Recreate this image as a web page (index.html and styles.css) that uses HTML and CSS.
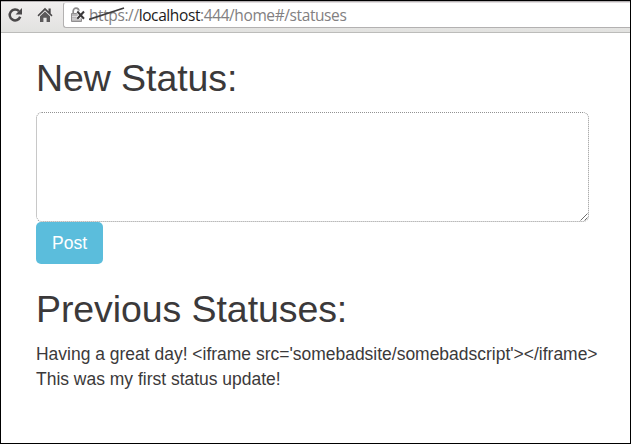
FILE: index.html
```html
<!DOCTYPE html>
<html lang="en">
<head>
<meta charset="utf-8">
<title>Statuses</title>
<link rel="stylesheet" href="styles.css">
</head>
<body>
<div class="window">
  <header class="toolbar">
    <svg class="icon reload" width="16" height="16" viewBox="0 0 16 16" aria-hidden="true">
      <path d="M12 4.200A5.400 5.400 0 1 0 13.200 9.800" fill="none" stroke="#4b494a" stroke-width="2.500"/>
      <path d="M15 1v6.400H8.600z" fill="#4b494a"/>
    </svg>
    <svg class="icon home" width="16" height="16" viewBox="0 0 16 16" aria-hidden="true">
      <path d="M8 .8 11.500 4.200V1.500h2.200v5L15.500 8.200 14.500 9.400 8 3.200 1.500 9.400.5 8.200z" fill="#4b494a"/>
      <path d="M8 4.500 13 9.300V15H9.600v-4.200H6.400V15H3V9.300z" fill="#5b595a"/>
    </svg>
    <div class="address">
      <svg class="lock" width="16" height="16" viewBox="0 0 16 16" aria-hidden="true">
        <path d="M3.200 6.500V4a2.800 2.800 0 0 1 5.600 0V6.500" fill="none" stroke="#8d8b8c" stroke-width="1.700"/>
        <path d="M1.500 6.500h10v8h-10z" fill="#b9b7b8" stroke="#918f90"/>
        <path d="M2 9.500h9M2 12h9" stroke="#dddbdc"/>
        <path d="M7.500 4.500l6.500 7M14 4.500l-6.500 7" stroke="#fff" stroke-width="3.500"/>
        <path d="M7.300 4.500l6.700 7.300M14 4.500l-6.700 7.300" stroke="#3b393a" stroke-width="2"/>
      </svg>
      <span class="url"><span class="scheme">https<svg class="strike" width="36" height="14" viewBox="0 0 36 14" aria-hidden="true"><path d="M0 12.500 35 1" stroke="#3f3d3e" stroke-width="1.800"/></svg></span>://<span class="host">localhost</span>:444/home#/statuses</span>
    </div>
  </header>
  <main class="page">
    <h1>New Status:</h1>
    <div class="field">
      <textarea aria-label="New status"></textarea>
      <svg class="grip" width="8" height="8" viewBox="0 0 8 8" aria-hidden="true"><path d="M.5 7.500l7-7M4.500 7.500l3-3" stroke="#6f6f6f"/></svg>
    </div>
    <button class="post" type="button">Post</button>
    <h1 class="previous">Previous Statuses:</h1>
    <p class="first">Having a great day! &lt;iframe src='somebadsite/somebadscript'&gt;&lt;/iframe&gt;</p>
    <p class="second">This was my first status update!</p>
  </main>
</div>
</body>
</html>
```
FILE: styles.css
```css
* { box-sizing: border-box; }
body { margin: 0; background: #fff; }
.window {
  height: 444px;
  border: 1px solid #000;
  overflow: hidden;
  font-family: "Liberation Sans", Arial, sans-serif;
  color: #3b393a;
}
.toolbar {
  display: flex;
  height: 32px;
  padding-left: 6px;
  background: linear-gradient(#f0eeee, #e2e2e0);
  border-top: 1px solid #b5b1b3;
  border-bottom: 1px solid #bcbcba;
}
.icon { flex: none; margin-top: 5px; }
.home { margin-left: 14px; }
.address {
  display: flex;
  flex: 1;
  height: 26px;
  margin-left: 10px;
  background: #fff;
  border: 1px solid #b3b1b1;
  border-right: 0;
  border-top-color: #e3dfe1;
  border-radius: 3px 0 0 3px;
}
.lock { flex: none; margin: 4px 0 0 6px; }
.url {
  margin-left: 3px;
  font: 15.500px/24px "Open Sans", "Noto Sans", sans-serif;
  letter-spacing: -0.400px;
  color: #828081;
  white-space: nowrap;
}
.scheme { position: relative; }
.strike { position: absolute; left: 0; top: 3px; }
.host { color: #1c1a1b; }
.page { padding: 24px 0 0 35px; }
h1 {
  margin: 0;
  height: 42px;
  font-size: 37.500px;
  line-height: 42px;
  font-weight: 400;
  letter-spacing: -0.080px;
}
.field { position: relative; width: 553px; height: 110px; margin-top: 13px; }
textarea {
  display: block;
  width: 100%;
  height: 100%;
  border: 1px dotted #929292;
  border-radius: 6px;
  background: #fff;
  resize: none;
  outline: 0;
}
.grip { position: absolute; right: 1px; bottom: 1px; }
.post {
  display: block;
  width: 67px;
  height: 42px;
  padding: 0;
  border: 0;
  border-radius: 5px;
  background: #5bbddc;
  color: #fff;
  font: 17.500px/42px "Liberation Sans", Arial, sans-serif;
}
.previous { margin-top: 24px; }
p { margin: 0; font-size: 17.480px; line-height: 25px; white-space: nowrap; }
.first { margin-top: 12px; }
```
